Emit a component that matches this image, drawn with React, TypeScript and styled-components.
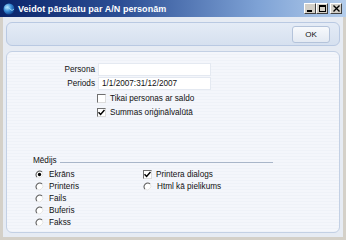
import React from 'react';
import styled, { createGlobalStyle } from 'styled-components';

const GlobalStyle = createGlobalStyle`
  html, body {
    margin: 0;
    padding: 0;
    background: #d4d0c8;
  }
  body {
    font-family: "Liberation Sans", Arial, sans-serif;
  }
`;

const Window = styled.div`
  width: 346px;
  height: 240px;
  box-sizing: border-box;
  display: flex;
  flex-direction: column;
  background: #d4d0c8;
  padding: 0 3px 3px 3px;
  overflow: hidden;
`;

const TitleBar = styled.div`
  height: 17px;
  margin: 0 -3px;
  padding: 0 3px 0 3px;
  display: flex;
  align-items: center;
  gap: 3px;
  background: linear-gradient(90deg, #0a246a 0%, #2c4f95 35%, #7fa3d6 75%, #b4cdeb 100%);
`;

const Title = styled.span`
  flex: 1;
  color: #ffffff;
  font-weight: bold;
  font-size: 9px;
  letter-spacing: 0.05px;
  white-space: nowrap;
`;

const WinButtons = styled.div`
  display: flex;
  margin-right: 1px;
`;

const WinButton = styled.div<{ $gap?: boolean }>`
  width: 12px;
  height: 11px;
  box-sizing: border-box;
  margin-left: ${p => (p.$gap ? '2px' : '0')};
  background: #d4d0c8;
  border: 1px solid;
  border-color: #ffffff #404040 #404040 #ffffff;
  display: flex;
  align-items: center;
  justify-content: center;
`;

const Body = styled.div`
  flex: 1;
  display: flex;
  flex-direction: column;
  gap: 5px;
  padding: 5px 3px 4px 3px;
  background: #e6ebf3;
`;

const Toolbar = styled.div`
  height: 24px;
  box-sizing: border-box;
  display: flex;
  align-items: center;
  justify-content: flex-end;
  padding-right: 9px;
  border: 1px solid #b9c9e2;
  border-radius: 6px;
  background: linear-gradient(180deg, #e4ebf6 0%, #d6e0ef 100%);
`;

const OkButton = styled.button`
  width: 38px;
  height: 17px;
  padding: 0;
  border: 1px solid #b4c3da;
  border-radius: 3px;
  background: linear-gradient(180deg, #f7f9fc 0%, #e3e9f2 100%);
  font-family: "Liberation Sans", Arial, sans-serif;
  font-size: 8px;
  color: #111;
`;

const MainPanel = styled.div`
  flex: 1;
  box-sizing: border-box;
  border: 1px solid #c3d0e4;
  border-radius: 6px;
  background: repeating-linear-gradient(180deg, #f4f6fb 0px, #f4f6fb 2px, #eff2f8 2px, #eff2f8 3px);
  padding-top: 11px;
  display: flex;
  flex-direction: column;
  font-size: 8.2px;
  color: #111;
`;

const FormGrid = styled.div`
  display: grid;
  grid-template-columns: 88px 113px;
  column-gap: 3px;
  row-gap: 1px;
  align-items: center;
`;

const Label = styled.span`
  text-align: right;
  line-height: 13px;
`;

const Field = styled.div`
  height: 13px;
  box-sizing: border-box;
  background: #ffffff;
  border: 1px solid #e4e9f1;
  padding-left: 3px;
  line-height: 11px;
  white-space: nowrap;
`;

const Options = styled.div`
  margin-left: 90px;
  margin-top: 4px;
  display: flex;
  flex-direction: column;
  gap: 5px;
`;

const OptionRow = styled.label`
  display: flex;
  align-items: center;
  gap: 3px;
  height: 9px;
  line-height: 9px;
  white-space: nowrap;
`;

const Box = styled.span`
  width: 9px;
  height: 9px;
  box-sizing: border-box;
  background: #ffffff;
  border: 1px solid;
  border-color: #6f6f6f #dcdcdc #dcdcdc #6f6f6f;
  display: inline-flex;
  align-items: center;
  justify-content: center;
  margin-right: 1px;
`;

const MediaSection = styled.div`
  margin: 39px 0 0 26px;
  width: 240px;
`;

const SectionHeader = styled.div`
  display: flex;
  align-items: center;
  gap: 3px;
  height: 9px;
  line-height: 9px;

  &::after {
    content: '';
    flex: 1;
    height: 1px;
    margin-top: 4px;
    background: #a9b6c9;
  }
`;

const MediaColumns = styled.div`
  display: grid;
  grid-template-columns: 108px 1fr;
  margin-top: 5px;
  padding-left: 2px;
`;

const Column = styled.div`
  display: flex;
  flex-direction: column;
  gap: 3px;
`;

const TitleIcon = () => (
  <svg width="12" height="12" viewBox="0 0 12 12">
    <defs>
      <radialGradient id="g" cx="0.35" cy="0.35" r="0.7">
        <stop offset="0" stopColor="#bfe6ff" />
        <stop offset="0.5" stopColor="#3b8fd8" />
        <stop offset="1" stopColor="#0c3f8c" />
      </radialGradient>
    </defs>
    <circle cx="6" cy="6" r="5.5" fill="url(#g)" />
    <path d="M2 5 Q5 3 7 6 T11 6" stroke="#9fe0ff" strokeWidth="0.8" fill="none" />
  </svg>
);

const Check = ({ checked }: { checked?: boolean }) => (
  <Box>
    {checked && (
      <svg width="7" height="7" viewBox="0 0 7 7">
        <path d="M0.5 3.2 L2.6 5.4 L6.5 1" stroke="#000" strokeWidth="1.5" fill="none" />
      </svg>
    )}
  </Box>
);

const Radio = ({ checked }: { checked?: boolean }) => (
  <svg width="9" height="9" viewBox="0 0 12 12" style={{ marginRight: 2, flexShrink: 0 }}>
    <circle cx="6" cy="6" r="5" fill="#ffffff" />
    <path d="M9.5 2.5 A5 5 0 0 0 2.5 9.5" stroke="#5a5a5a" strokeWidth="1.4" fill="none" />
    <path d="M2.5 9.5 A5 5 0 0 0 9.5 2.5" stroke="#e0e0e0" strokeWidth="1.2" fill="none" />
    {checked && <circle cx="6" cy="6" r="2.2" fill="#000" />}
  </svg>
);

const Option = ({ label, checked, radio }: { label: string; checked?: boolean; radio?: boolean }) => (
  <OptionRow>
    {radio ? <Radio checked={checked} /> : <Check checked={checked} />}
    <span>{label}</span>
  </OptionRow>
);

const App: React.FC = () => (
  <>
    <GlobalStyle />
    <Window>
      <TitleBar>
        <TitleIcon />
        <Title>Veidot pārskatu par A/N personām</Title>
        <WinButtons>
          <WinButton>
            <svg width="6" height="6" viewBox="0 0 6 6"><rect x="0" y="4" width="5" height="2" fill="#000" /></svg>
          </WinButton>
          <WinButton>
            <svg width="7" height="7" viewBox="0 0 7 7"><rect x="0.5" y="0.5" width="6" height="6" fill="none" stroke="#000" /><rect x="0" y="0" width="7" height="2" fill="#000" /></svg>
          </WinButton>
          <WinButton $gap>
            <svg width="7" height="7" viewBox="0 0 7 7"><path d="M0.5 0.5 L6.5 6.5 M6.5 0.5 L0.5 6.5" stroke="#000" strokeWidth="1.4" /></svg>
          </WinButton>
        </WinButtons>
      </TitleBar>
      <Body>
        <Toolbar>
          <OkButton>OK</OkButton>
        </Toolbar>
        <MainPanel>
          <FormGrid>
            <Label>Persona</Label>
            <Field />
            <Label>Periods</Label>
            <Field>1/1/2007:31/12/2007</Field>
          </FormGrid>
          <Options>
            <Option label="Tikai personas ar saldo" />
            <Option label="Summas oriģinālvalūtā" checked />
          </Options>
          <MediaSection>
            <SectionHeader>Mēdijs</SectionHeader>
            <MediaColumns>
              <Column>
                <Option radio checked label="Ekrāns" />
                <Option radio label="Printeris" />
                <Option radio label="Fails" />
                <Option radio label="Buferis" />
                <Option radio label="Fakss" />
              </Column>
              <Column>
                <Option label="Printera dialogs" checked />
                <Option radio label="Html kā pielikums" />
              </Column>
            </MediaColumns>
          </MediaSection>
        </MainPanel>
      </Body>
    </Window>
  </>
);

export default App;
